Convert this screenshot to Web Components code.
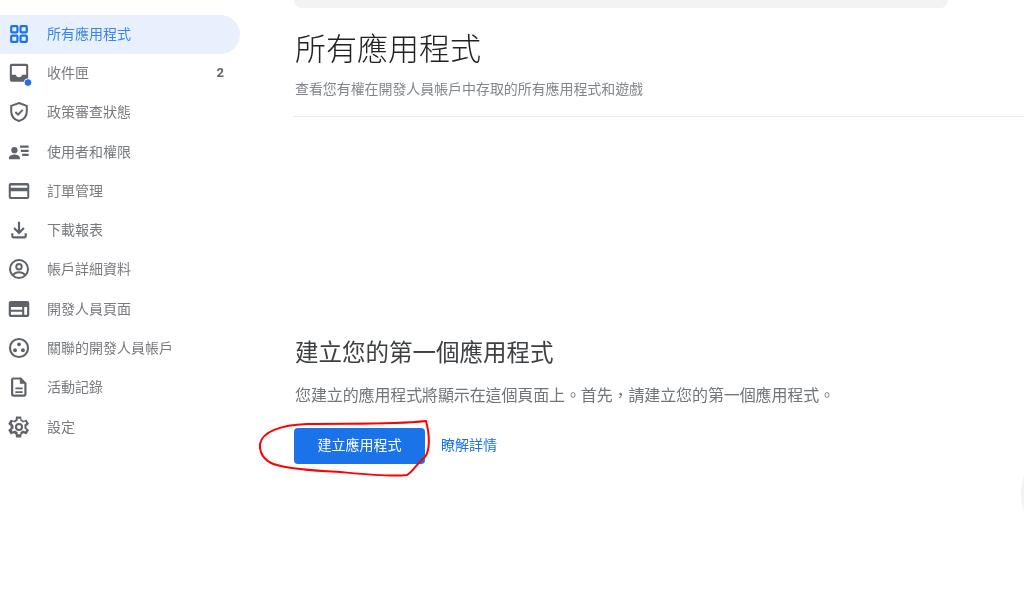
<!DOCTYPE html>
<html lang="zh-Hant">
<head>
<meta charset="utf-8">
<title>所有應用程式</title>
<style>
html, body { margin: 0; padding: 0; background: #fff; overflow: hidden; }
body {
    width: 1024px;
    height: 595px;
    font-family: Roboto, "Noto Sans CJK TC", sans-serif;
    color: #5f6368;
}
</style>
</head>
<body>
<console-app>
    <side-nav slot="nav">
        <nav-item active label="所有應用程式" icon="apps"></nav-item>
        <nav-item label="收件匣" icon="inbox" count="2"></nav-item>
        <nav-item label="政策審查狀態" icon="shield"></nav-item>
        <nav-item label="使用者和權限" icon="users"></nav-item>
        <nav-item label="訂單管理" icon="card"></nav-item>
        <nav-item label="下載報表" icon="download"></nav-item>
        <nav-item label="帳戶詳細資料" icon="account"></nav-item>
        <nav-item label="開發人員頁面" icon="page"></nav-item>
        <nav-item label="關聯的開發人員帳戶" icon="linked"></nav-item>
        <nav-item label="活動記錄" icon="doc"></nav-item>
        <nav-item label="設定" icon="gear"></nav-item>
    </side-nav>
    <apps-page></apps-page>
</console-app>

<script>
// 24x24 material style icons, drawn at 22px in the nav
const navIcons = {
    apps: `<g fill="none" stroke="currentColor" stroke-width="2.400"><rect x="3.500" y="3.500" width="6.800" height="6.800" rx="1"/><rect x="13.700" y="3.500" width="6.800" height="6.800" rx="1"/><rect x="3.500" y="13.700" width="6.800" height="6.800" rx="1"/><rect x="13.700" y="13.700" width="6.800" height="6.800" rx="1"/></g>`,
    inbox: `<path fill-rule="evenodd" d="M4 2h16a2 2 0 0 1 2 2v15.600a2 2 0 0 1-2 2H4a2 2 0 0 1-2-2V4a2 2 0 0 1 2-2zm.2 2.300v9.700h4.300a3.600 3.600 0 0 0 7 0h4.300V4.300z"/><circle cx="21.800" cy="22.400" r="4.200" fill="#1a73e8" stroke="#fff" stroke-width="1"/>`,
    shield: `<path fill="none" stroke="currentColor" stroke-width="2.200" d="M12 2.200l8.500 3.100v6.100c0 5-3.500 9-8.500 10.500-5-1.500-8.500-5.500-8.500-10.500V5.300z"/><path fill="none" stroke="currentColor" stroke-width="2" d="M8 12l3 3 5-5.200"/>`,
    users: `<circle cx="7" cy="10" r="3.400"/><path d="M1 20v-1.500c0-2.400 3.800-3.700 6-3.700s6 1.300 6 3.700V20z"/><path d="M13 5h9.500v2.400H13zM14 9.500h8.500v2.400H14zM15.500 14h7v2.400h-7z"/>`,
    card: `<path fill-rule="evenodd" d="M3 3.300h18a2.200 2.200 0 0 1 2.200 2.200v13a2.200 2.200 0 0 1-2.200 2.200H3a2.200 2.200 0 0 1-2.200-2.200v-13A2.200 2.200 0 0 1 3 3.300zm0 2.600v2.500h18V5.900zm0 6.300v6.300h18v-6.300z"/>`,
    download: `<path d="M10.800 3h2.400v9.200l3.300-3.300 1.700 1.700-6.200 6.200-6.200-6.200 1.700-1.700 3.300 3.300z"/><path d="M3.500 15.500h2.400v3.200h12.200v-3.200h2.400v3.400a2.300 2.300 0 0 1-2.300 2.300H5.800a2.300 2.300 0 0 1-2.300-2.300z"/>`,
    account: `<circle cx="12" cy="12" r="9.800" fill="none" stroke="currentColor" stroke-width="2.200"/><circle cx="12" cy="9.500" r="3" fill="none" stroke="currentColor" stroke-width="2.100"/><path fill="none" stroke="currentColor" stroke-width="2.100" d="M5.500 18.500c1.500-2 4-3 6.500-3s5 1 6.500 3"/>`,
    page: `<path fill-rule="evenodd" d="M3 3.300h18a2.200 2.200 0 0 1 2.200 2.200v13a2.200 2.200 0 0 1-2.200 2.200H3a2.200 2.200 0 0 1-2.200-2.200v-13A2.200 2.200 0 0 1 3 3.300zm.2 6.500v3h12.300v-3zm14.500 0v8.600h3.100V9.800zM3.200 15v3.400h12.300V15z"/>`,
    linked: `<path fill-rule="evenodd" d="M12 1a11 11 0 1 1 0 22 11 11 0 0 1 0-22zm0 2.300a8.700 8.700 0 1 0 0 17.400 8.700 8.700 0 0 0 0-17.400z"/><circle cx="12" cy="8" r="2.100"/><circle cx="7.700" cy="14.500" r="2.100"/><circle cx="16.300" cy="14.500" r="2.100"/>`,
    doc: `<path fill-rule="evenodd" d="M5.500 1.500h8.700l6 6V20.300a2.200 2.200 0 0 1-2.200 2.200H5.500a2.200 2.200 0 0 1-2.200-2.200V3.700a2.200 2.200 0 0 1 2.200-2.200zm.2 2.300v16.400h12.100V8.500h-4.900V3.800z"/><path d="M8 12.500h8v2H8zM8 16.500h8v2H8z"/>`,
    gear: `<path fill-rule="evenodd" transform="translate(12 12) scale(1.100) translate(-12 -12)" d="M19.400 13c.1-.3.100-.7.100-1s0-.7-.1-1l2.200-1.700c.2-.2.300-.4.100-.7l-2.100-3.600c-.1-.2-.4-.3-.6-.2l-2.600 1c-.5-.4-1.100-.8-1.800-1l-.4-2.700c0-.3-.2-.4-.5-.4H9.500c-.3 0-.5.100-.5.400l-.4 2.700c-.7.200-1.300.6-1.800 1l-2.600-1c-.2-.1-.5 0-.6.200L1.500 8.600c-.2.300-.1.500.1.700L3.800 11c-.1.300-.1.700-.1 1s0 .7.100 1l-2.200 1.700c-.2.200-.3.400-.1.700l2.100 3.600c.1.200.4.300.6.200l2.600-1c.5.400 1.100.8 1.800 1l.4 2.700c0 .3.200.4.500.4h4.200c.3 0 .5-.1.500-.4l.4-2.700c.7-.2 1.300-.6 1.800-1l2.600 1c.2.100.5 0 .6-.2l2.100-3.600c.2-.3.100-.5-.1-.7zm-2-1c0 .4 0 .8-.1 1.200l1.900 1.500-1 1.700-2.300-.9c-.7.600-1.500 1.100-2.400 1.400l-.3 2.400h-2.400l-.3-2.400c-.9-.3-1.700-.8-2.400-1.400l-2.300.9-1-1.700 1.900-1.500c-.2-.8-.2-1.600 0-2.400L4.800 8.300l1-1.700 2.300.9c.7-.6 1.500-1.100 2.400-1.400l.3-2.400h2.400l.3 2.400c.9.300 1.700.8 2.400 1.400l2.300-.9 1 1.700-1.900 1.500c.1.400.1.800.1 1.200zM12 8a4 4 0 1 0 0 8 4 4 0 0 0 0-8zm0 2a2 2 0 1 1 0 4 2 2 0 0 1 0-4z"/>`
};

class ConsoleApp extends HTMLElement {
    constructor() {
        super();
        this.attachShadow({mode: 'open'});
        this.shadowRoot.innerHTML = `
        <style>
        :host {
            display: grid;
            grid-template-columns: 240px 1fr;
            width: 1024px;
            height: 595px;
            overflow: hidden;
            /* the reference is a slightly soft, rescaled screenshot */
            filter: blur(0.35px);
        }
        </style>
        <slot name="nav"></slot>
        <slot></slot>
        `;
    }
}

class SideNav extends HTMLElement {
    constructor() {
        super();
        this.attachShadow({mode: 'open'});
        this.shadowRoot.innerHTML = `
        <style>
        :host {
            display: flex;
            flex-direction: column;
            padding-top: 15px;
        }
        </style>
        <slot></slot>
        `;
    }
}

class NavItem extends HTMLElement {
    constructor() {
        super();
        this.attachShadow({mode: 'open'});
    }

    connectedCallback() {
        const label = this.getAttribute('label');
        const icon = navIcons[this.getAttribute('icon')];
        const count = this.getAttribute('count');
        this.shadowRoot.innerHTML = `
        <style>
        :host {
            display: flex;
            align-items: center;
            height: 39.3px;
            padding: 0 16px 2px 8px;
            box-sizing: border-box;
            font-size: 14px;
            color: #5f6368;
            border-radius: 0 20px 20px 0;
        }
        :host([active]) {
            background: #e8f0fe;
            color: #1a73e8;
        }
        svg {
            width: 22px;
            height: 22px;
            fill: currentColor;
            flex: none;
            overflow: visible;
        }
        .label {
            margin-left: 17px;
            padding-bottom: 2px;
            flex: 1;
            white-space: nowrap;
            opacity: .85;
        }
        .count {
            font-size: 13px;
            font-weight: 700;
        }
        </style>
        <svg viewBox="0 0 24 24">${icon}</svg>
        <span class="label">${label}</span>
        ${count ? `<span class="count">${count}</span>` : ''}
        `;
    }
}

class AppsPage extends HTMLElement {
    constructor() {
        super();
        this.attachShadow({mode: 'open'});
        this.shadowRoot.innerHTML = `
        <style>
        :host {
            display: block;
            position: relative;
            padding-left: 54px;
            overflow: hidden;
        }
        .banner {
            width: 654px;
            height: 8px;
            background: #f1f3f4;
            border-radius: 0 0 8px 8px;
        }
        h1, .sub, h2, .empty p {
            padding-left: 1px;
        }
        h1 {
            margin: 20px 0 0;
            font-size: 31px;
            line-height: 44px;
            font-weight: 300;
            color: #202124;
        }
        .sub {
            margin: 7px 0 0;
            font-size: 14px;
            line-height: 20px;
            letter-spacing: -0.08px;
            color: #80868b;
        }
        hr {
            margin: 17px 0 0;
            border: 0;
            border-top: 1px solid #e8eaed;
        }
        .empty {
            padding-top: 220px;
        }
        h2 {
            margin: 0;
            font-size: 23.500px;
            line-height: 32px;
            font-weight: 400;
            color: #3c4043;
        }
        .empty p {
            margin: 15px 0 0;
            font-size: 16px;
            line-height: 24px;
            letter-spacing: -0.12px;
            color: #70757a;
        }
        .actions {
            display: flex;
            align-items: center;
            gap: 16px;
            margin-top: 20px;
        }
        button {
            width: 131px;
            height: 36px;
            padding: 0 0 4px;
            border: 0;
            border-radius: 4px;
            background: #1a73e8;
            color: #fff;
            font: inherit;
            font-size: 14px;
        }
        a {
            margin-top: -4px;
            color: #1a73e8;
            font-size: 14px;
            text-decoration: none;
        }
        .scribble {
            position: absolute;
            left: 0;
            top: 0;
            width: 784px;
            height: 595px;
            pointer-events: none;
        }
        .edge {
            position: absolute;
            right: -8px;
            top: 474px;
            width: 11px;
            height: 40px;
            border-radius: 50%;
            background: #f1f3f4;
        }
        </style>
        <div class="banner"></div>
        <h1>所有應用程式</h1>
        <p class="sub">查看您有權在開發人員帳戶中存取的所有應用程式和遊戲</p>
        <hr>
        <section class="empty">
            <h2>建立您的第一個應用程式</h2>
            <p>您建立的應用程式將顯示在這個頁面上。首先&#xFF0C;請建立您的第一個應用程式。</p>
            <div class="actions">
                <button>建立應用程式</button>
                <a href="#">瞭解詳情</a>
            </div>
        </section>
        <div class="edge"></div>
        <svg class="scribble" viewBox="240 0 784 595">
            <path fill="none" stroke="#f00" stroke-width="2" stroke-linecap="round" stroke-linejoin="round" d="M426 421C390 425 345 423 307 424C280 425 262 432 260 444C259 456 268 463 277 465C295 470 320 471 340 472C362 474 390 477 407 475C413 472 418 462 425 457C430 450 430 436 426 421Z"/>
        </svg>
        `;
    }
}

customElements.define('console-app', ConsoleApp);
customElements.define('side-nav', SideNav);
customElements.define('nav-item', NavItem);
customElements.define('apps-page', AppsPage);
</script>
</body>
</html>
